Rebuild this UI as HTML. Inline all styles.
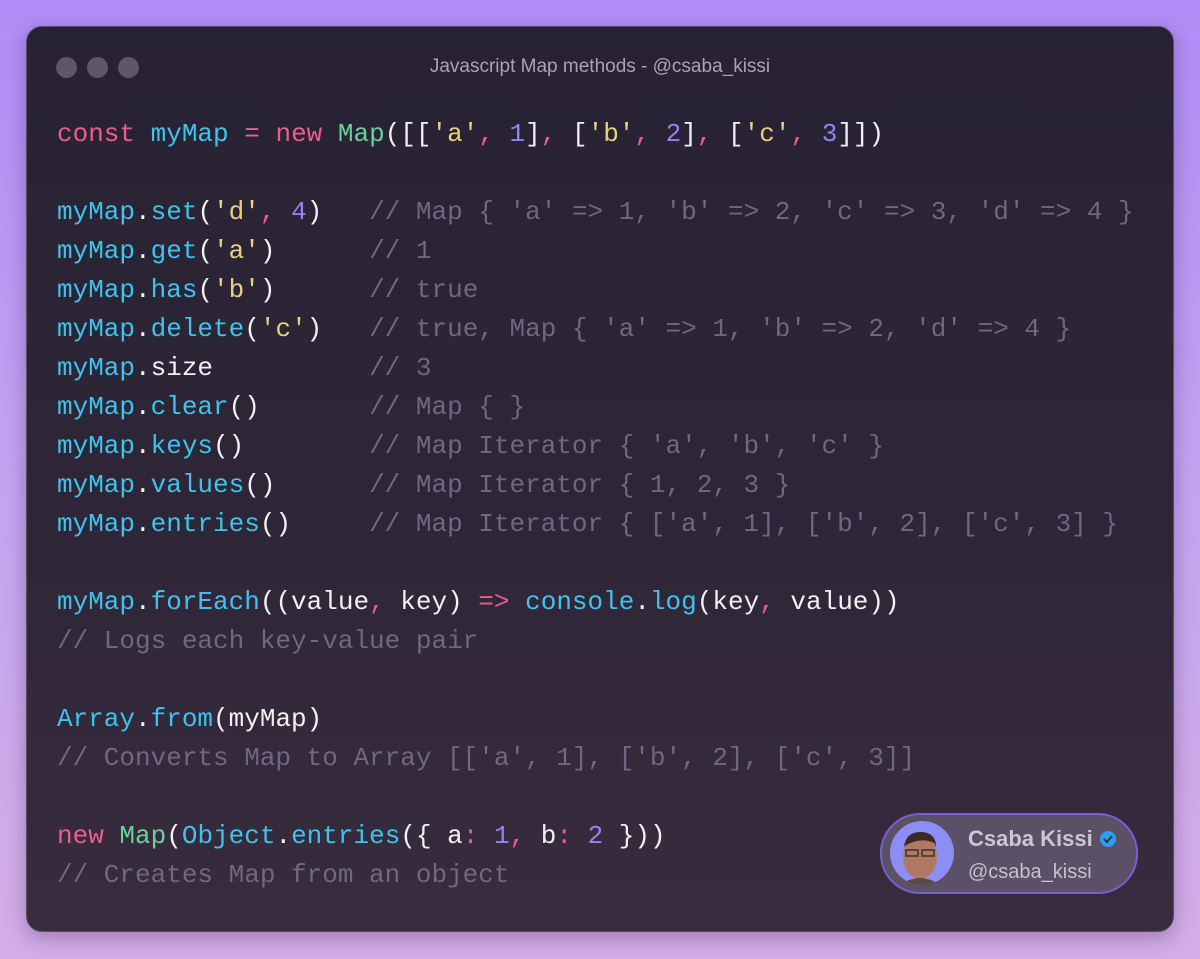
<!DOCTYPE html>
<html><head><meta charset="utf-8"><style>
html,body{margin:0;padding:0;width:1200px;height:959px;overflow:hidden}
body{background:linear-gradient(180deg,#b08cf6 0%,#c3a3f0 50%,#d4aee6 100%);position:relative;font-family:"Liberation Sans",sans-serif}
.win{position:absolute;left:26px;top:26px;width:1146px;height:904px;border-radius:16px;background:linear-gradient(180deg,#272233 0%,#2f2738 60%,#382c3e 100%);border:1px solid #5a5060;box-shadow:0 6px 20px rgba(60,30,90,.35)}
.dot{position:absolute;top:30px;width:21px;height:21px;border-radius:50%;background:#5e5866}
.title{position:absolute;top:29px;left:0;right:0;text-align:center;color:#a9a4b0;font-size:19px}
pre{position:absolute;left:30px;top:88px;margin:0;font-family:"Liberation Mono",monospace;font-size:26px;line-height:39px;color:#f2f0f4}
.k{color:#ec5c8d}.v{color:#3fc3ec}.g{color:#6ad19a}.s{color:#e6d27c}.n{color:#9484f2}.c{color:#6e6880}
.badge{position:absolute;left:853px;top:786px;width:254px;height:77px;border-radius:40px;background:#5b5167;border:2px solid #7a5fd0}
.av{position:absolute;left:8px;top:6px;width:64px;height:64px;border-radius:50%;background:#8c8ef6;overflow:hidden}
.name{position:absolute;left:86px;top:11px;color:#cdc6d4;font-weight:bold;font-size:22px}
.handle{position:absolute;left:86px;top:46px;color:#c7c0cf;font-size:20px}
</style></head><body>
<div class="win">
<div class="dot" style="left:29px"></div><div class="dot" style="left:60px"></div><div class="dot" style="left:91px"></div>
<div class="title">Javascript Map methods - @csaba_kissi</div>
<pre><span class="k">const</span> <span class="v">myMap</span> <span class="k">=</span> <span class="k">new</span> <span class="g">Map</span>([[<span class="s">'a'</span><span class="k">,</span> <span class="n">1</span>]<span class="k">,</span> [<span class="s">'b'</span><span class="k">,</span> <span class="n">2</span>]<span class="k">,</span> [<span class="s">'c'</span><span class="k">,</span> <span class="n">3</span>]])

<span class="v">myMap</span>.<span class="v">set</span>(<span class="s">'d'</span><span class="k">,</span> <span class="n">4</span>)   <span class="c">// Map { 'a' =&gt; 1, 'b' =&gt; 2, 'c' =&gt; 3, 'd' =&gt; 4 }</span>
<span class="v">myMap</span>.<span class="v">get</span>(<span class="s">'a'</span>)      <span class="c">// 1</span>
<span class="v">myMap</span>.<span class="v">has</span>(<span class="s">'b'</span>)      <span class="c">// true</span>
<span class="v">myMap</span>.<span class="v">delete</span>(<span class="s">'c'</span>)   <span class="c">// true, Map { 'a' =&gt; 1, 'b' =&gt; 2, 'd' =&gt; 4 }</span>
<span class="v">myMap</span>.size          <span class="c">// 3</span>
<span class="v">myMap</span>.<span class="v">clear</span>()       <span class="c">// Map { }</span>
<span class="v">myMap</span>.<span class="v">keys</span>()        <span class="c">// Map Iterator { 'a', 'b', 'c' }</span>
<span class="v">myMap</span>.<span class="v">values</span>()      <span class="c">// Map Iterator { 1, 2, 3 }</span>
<span class="v">myMap</span>.<span class="v">entries</span>()     <span class="c">// Map Iterator { ['a', 1], ['b', 2], ['c', 3] }</span>

<span class="v">myMap</span>.<span class="v">forEach</span>((value<span class="k">,</span> key) <span class="k">=&gt;</span> <span class="v">console</span>.<span class="v">log</span>(key<span class="k">,</span> value))
<span class="c">// Logs each key-value pair</span>

<span class="v">Array</span>.<span class="v">from</span>(myMap)
<span class="c">// Converts Map to Array [['a', 1], ['b', 2], ['c', 3]]</span>

<span class="k">new</span> <span class="g">Map</span>(<span class="v">Object</span>.<span class="v">entries</span>({ a<span class="k">:</span> <span class="n">1</span><span class="k">,</span> b<span class="k">:</span> <span class="n">2</span> }))
<span class="c">// Creates Map from an object</span></pre>
<div class="badge">
<div class="av"><svg width="64" height="64" viewBox="0 0 64 64"><ellipse cx="30" cy="36" rx="17" ry="22" fill="#b07a62"/><path d="M14 26 Q16 10 32 11 Q46 12 46 26 L44 22 Q32 16 16 24 Z" fill="#3a2a24"/><rect x="16" y="29" width="12" height="6" fill="none" stroke="#333" stroke-width="1.5"/><rect x="32" y="29" width="12" height="6" fill="none" stroke="#333" stroke-width="1.5"/><path d="M10 64 Q30 50 50 64Z" fill="#5a4a44"/></svg></div>
<div class="name">Csaba Kissi <svg width="18" height="18" viewBox="0 0 18 18" style="vertical-align:-2px"><circle cx="9" cy="9" r="8" fill="#2a9df4"/><path d="M5 9 L8 12 L13 6" stroke="#333" stroke-width="2" fill="none"/></svg></div>
<div class="handle">@csaba_kissi</div>
</div>
</div>
</body></html>
